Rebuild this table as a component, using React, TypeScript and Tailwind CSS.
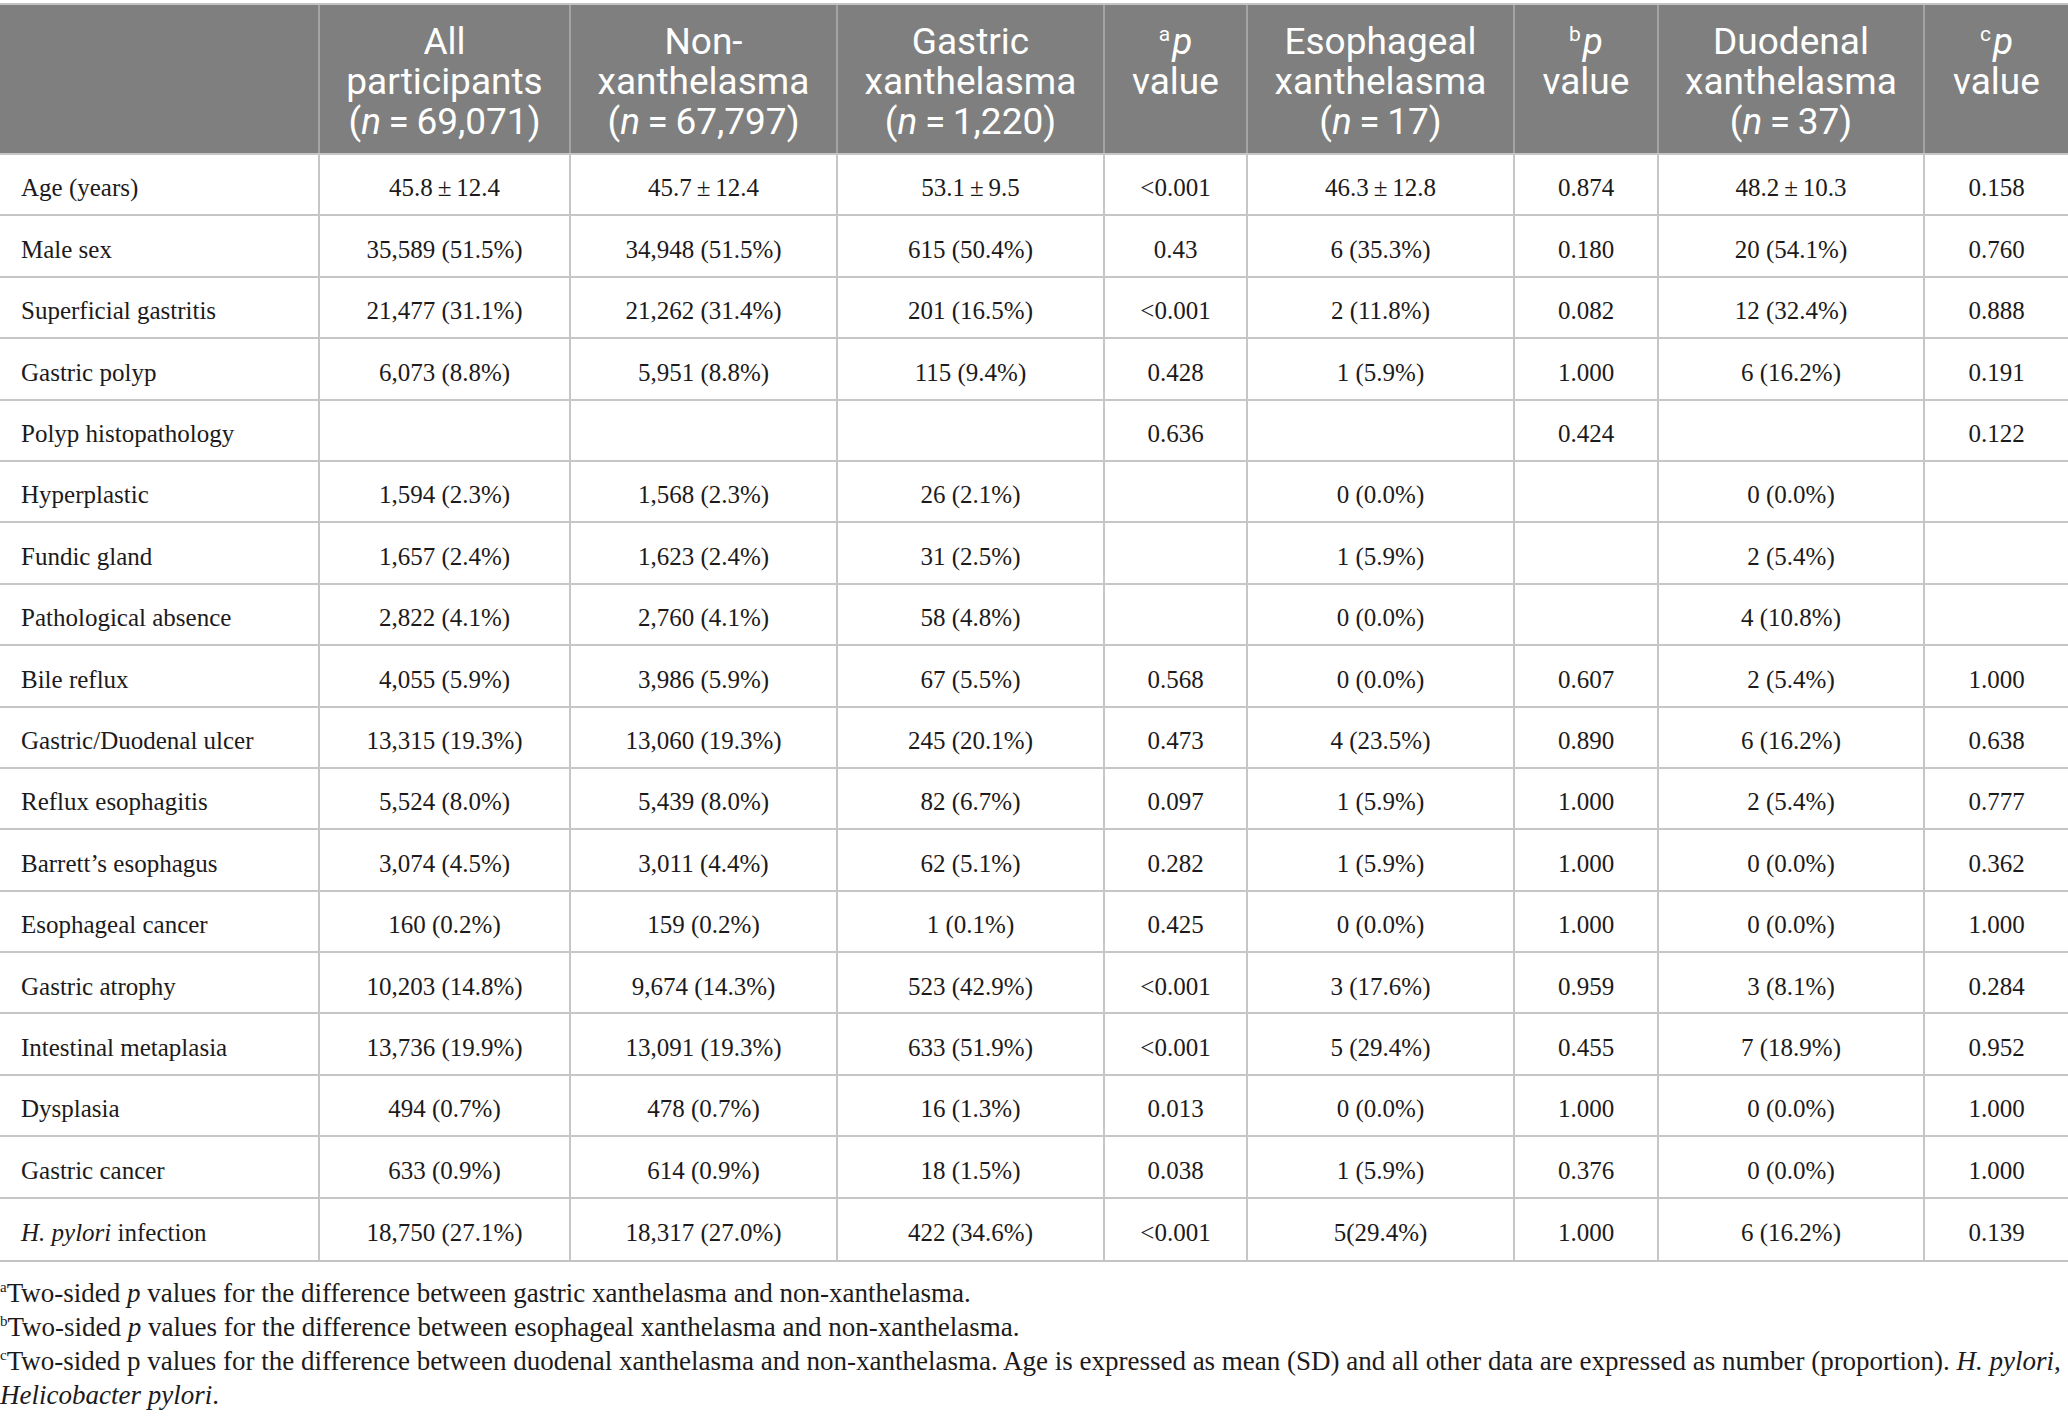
import React from "react";

type Row = { label: React.ReactNode; cells: string[] };

const T = "\u2009";

const rows: Row[] = [
  { label: "Age (years)", cells: [`45.8${T}±${T}12.4`, `45.7${T}±${T}12.4`, `53.1${T}±${T}9.5`, "<0.001", `46.3${T}±${T}12.8`, "0.874", `48.2${T}±${T}10.3`, "0.158"] },
  { label: "Male sex", cells: ["35,589 (51.5%)", "34,948 (51.5%)", "615 (50.4%)", "0.43", "6 (35.3%)", "0.180", "20 (54.1%)", "0.760"] },
  { label: "Superficial gastritis", cells: ["21,477 (31.1%)", "21,262 (31.4%)", "201 (16.5%)", "<0.001", "2 (11.8%)", "0.082", "12 (32.4%)", "0.888"] },
  { label: "Gastric polyp", cells: ["6,073 (8.8%)", "5,951 (8.8%)", "115 (9.4%)", "0.428", "1 (5.9%)", "1.000", "6 (16.2%)", "0.191"] },
  { label: "Polyp histopathology", cells: ["", "", "", "0.636", "", "0.424", "", "0.122"] },
  { label: "Hyperplastic", cells: ["1,594 (2.3%)", "1,568 (2.3%)", "26 (2.1%)", "", "0 (0.0%)", "", "0 (0.0%)", ""] },
  { label: "Fundic gland", cells: ["1,657 (2.4%)", "1,623 (2.4%)", "31 (2.5%)", "", "1 (5.9%)", "", "2 (5.4%)", ""] },
  { label: "Pathological absence", cells: ["2,822 (4.1%)", "2,760 (4.1%)", "58 (4.8%)", "", "0 (0.0%)", "", "4 (10.8%)", ""] },
  { label: "Bile reflux", cells: ["4,055 (5.9%)", "3,986 (5.9%)", "67 (5.5%)", "0.568", "0 (0.0%)", "0.607", "2 (5.4%)", "1.000"] },
  { label: "Gastric/Duodenal ulcer", cells: ["13,315 (19.3%)", "13,060 (19.3%)", "245 (20.1%)", "0.473", "4 (23.5%)", "0.890", "6 (16.2%)", "0.638"] },
  { label: "Reflux esophagitis", cells: ["5,524 (8.0%)", "5,439 (8.0%)", "82 (6.7%)", "0.097", "1 (5.9%)", "1.000", "2 (5.4%)", "0.777"] },
  { label: "Barrett\u2019s esophagus", cells: ["3,074 (4.5%)", "3,011 (4.4%)", "62 (5.1%)", "0.282", "1 (5.9%)", "1.000", "0 (0.0%)", "0.362"] },
  { label: "Esophageal cancer", cells: ["160 (0.2%)", "159 (0.2%)", "1 (0.1%)", "0.425", "0 (0.0%)", "1.000", "0 (0.0%)", "1.000"] },
  { label: "Gastric atrophy", cells: ["10,203 (14.8%)", "9,674 (14.3%)", "523 (42.9%)", "<0.001", "3 (17.6%)", "0.959", "3 (8.1%)", "0.284"] },
  { label: "Intestinal metaplasia", cells: ["13,736 (19.9%)", "13,091 (19.3%)", "633 (51.9%)", "<0.001", "5 (29.4%)", "0.455", "7 (18.9%)", "0.952"] },
  { label: "Dysplasia", cells: ["494 (0.7%)", "478 (0.7%)", "16 (1.3%)", "0.013", "0 (0.0%)", "1.000", "0 (0.0%)", "1.000"] },
  { label: "Gastric cancer", cells: ["633 (0.9%)", "614 (0.9%)", "18 (1.5%)", "0.038", "1 (5.9%)", "0.376", "0 (0.0%)", "1.000"] },
  {
    label: (
      <span>
        <i>H. pylori</i> infection
      </span>
    ),
    cells: ["18,750 (27.1%)", "18,317 (27.0%)", "422 (34.6%)", "<0.001", "5(29.4%)", "1.000", "6 (16.2%)", "0.139"],
  },
];

const cols = "grid grid-cols-[318px_251px_267px_267px_143px_267px_144px_266px_1fr]";

function N({ v }: { v: string }) {
  return (
    <>
      (<i>n</i>
      {T}={T}
      {v})
    </>
  );
}

function PHead({ s }: { s: string }) {
  return (
    <>
      <sup className="text-[21px] relative -top-[13px] mr-[2px]">{s}</sup>
      <i>p</i>
      <br />
      value
    </>
  );
}

function Note({ s }: { s: string }) {
  return <sup className="text-[15px] leading-none static align-[10px]">{s}</sup>;
}

const headers: React.ReactNode[] = [
  <>All<br />participants<br /><N v="69,071" /></>,
  <>Non-<br />xanthelasma<br /><N v="67,797" /></>,
  <>Gastric<br />xanthelasma<br /><N v="1,220" /></>,
  <PHead s="a" />,
  <>Esophageal<br />xanthelasma<br /><N v="17" /></>,
  <PHead s="b" />,
  <>Duodenal<br />xanthelasma<br /><N v="37" /></>,
  <PHead s="c" />,
];

export default function App() {
  return (
    <div className="w-[2068px] min-h-[1425px] bg-white pt-[3px] text-[#1c1a1b]">
      <div className="border-t-2 border-b-2 border-[#c3c3c3]">
        <div className={`${cols} h-[150px] bg-[#7e7f7e] border-b-2 border-[#c6c6c6] text-white font-['Roboto',sans-serif] text-[37px] leading-[40px]`}>
          <div />
          {headers.map((h, i) => (
            <div key={i} className="border-l-2 border-[#a3a4a3] text-center pt-[17px]">
              {h}
            </div>
          ))}
        </div>
        {rows.map((r, i) => (
          <div
            key={i}
            className={`${cols} h-[61.4px] ${i < rows.length - 1 ? "border-b-2" : ""} border-[#c6c6c6] font-['Liberation_Serif',serif] text-[25px]`}
          >
            <div className="flex items-center pl-[21px] pt-[7px]">{r.label}</div>
            {r.cells.map((c, j) => (
              <div key={j} className="flex items-center justify-center border-l-2 border-[#c6c6c6] pt-[7px]">
                {c}
              </div>
            ))}
          </div>
        ))}
      </div>
      <div className="mt-[14px] font-['Liberation_Serif',serif] text-[27px] leading-[34px]">
        <p>
          <Note s="a" />Two-sided <i>p</i> values for the difference between gastric xanthelasma and non-xanthelasma.
        </p>
        <p>
          <Note s="b" />Two-sided <i>p</i> values for the difference between esophageal xanthelasma and non-xanthelasma.
        </p>
        <p>
          <Note s="c" />Two-sided p values for the difference between duodenal xanthelasma and non-xanthelasma. Age is expressed as mean (SD) and all other data are expressed as number (proportion). <span className="whitespace-nowrap"><i>H. pylori</i>,</span> <i>Helicobacter pylori</i>.
        </p>
      </div>
    </div>
  );
}
